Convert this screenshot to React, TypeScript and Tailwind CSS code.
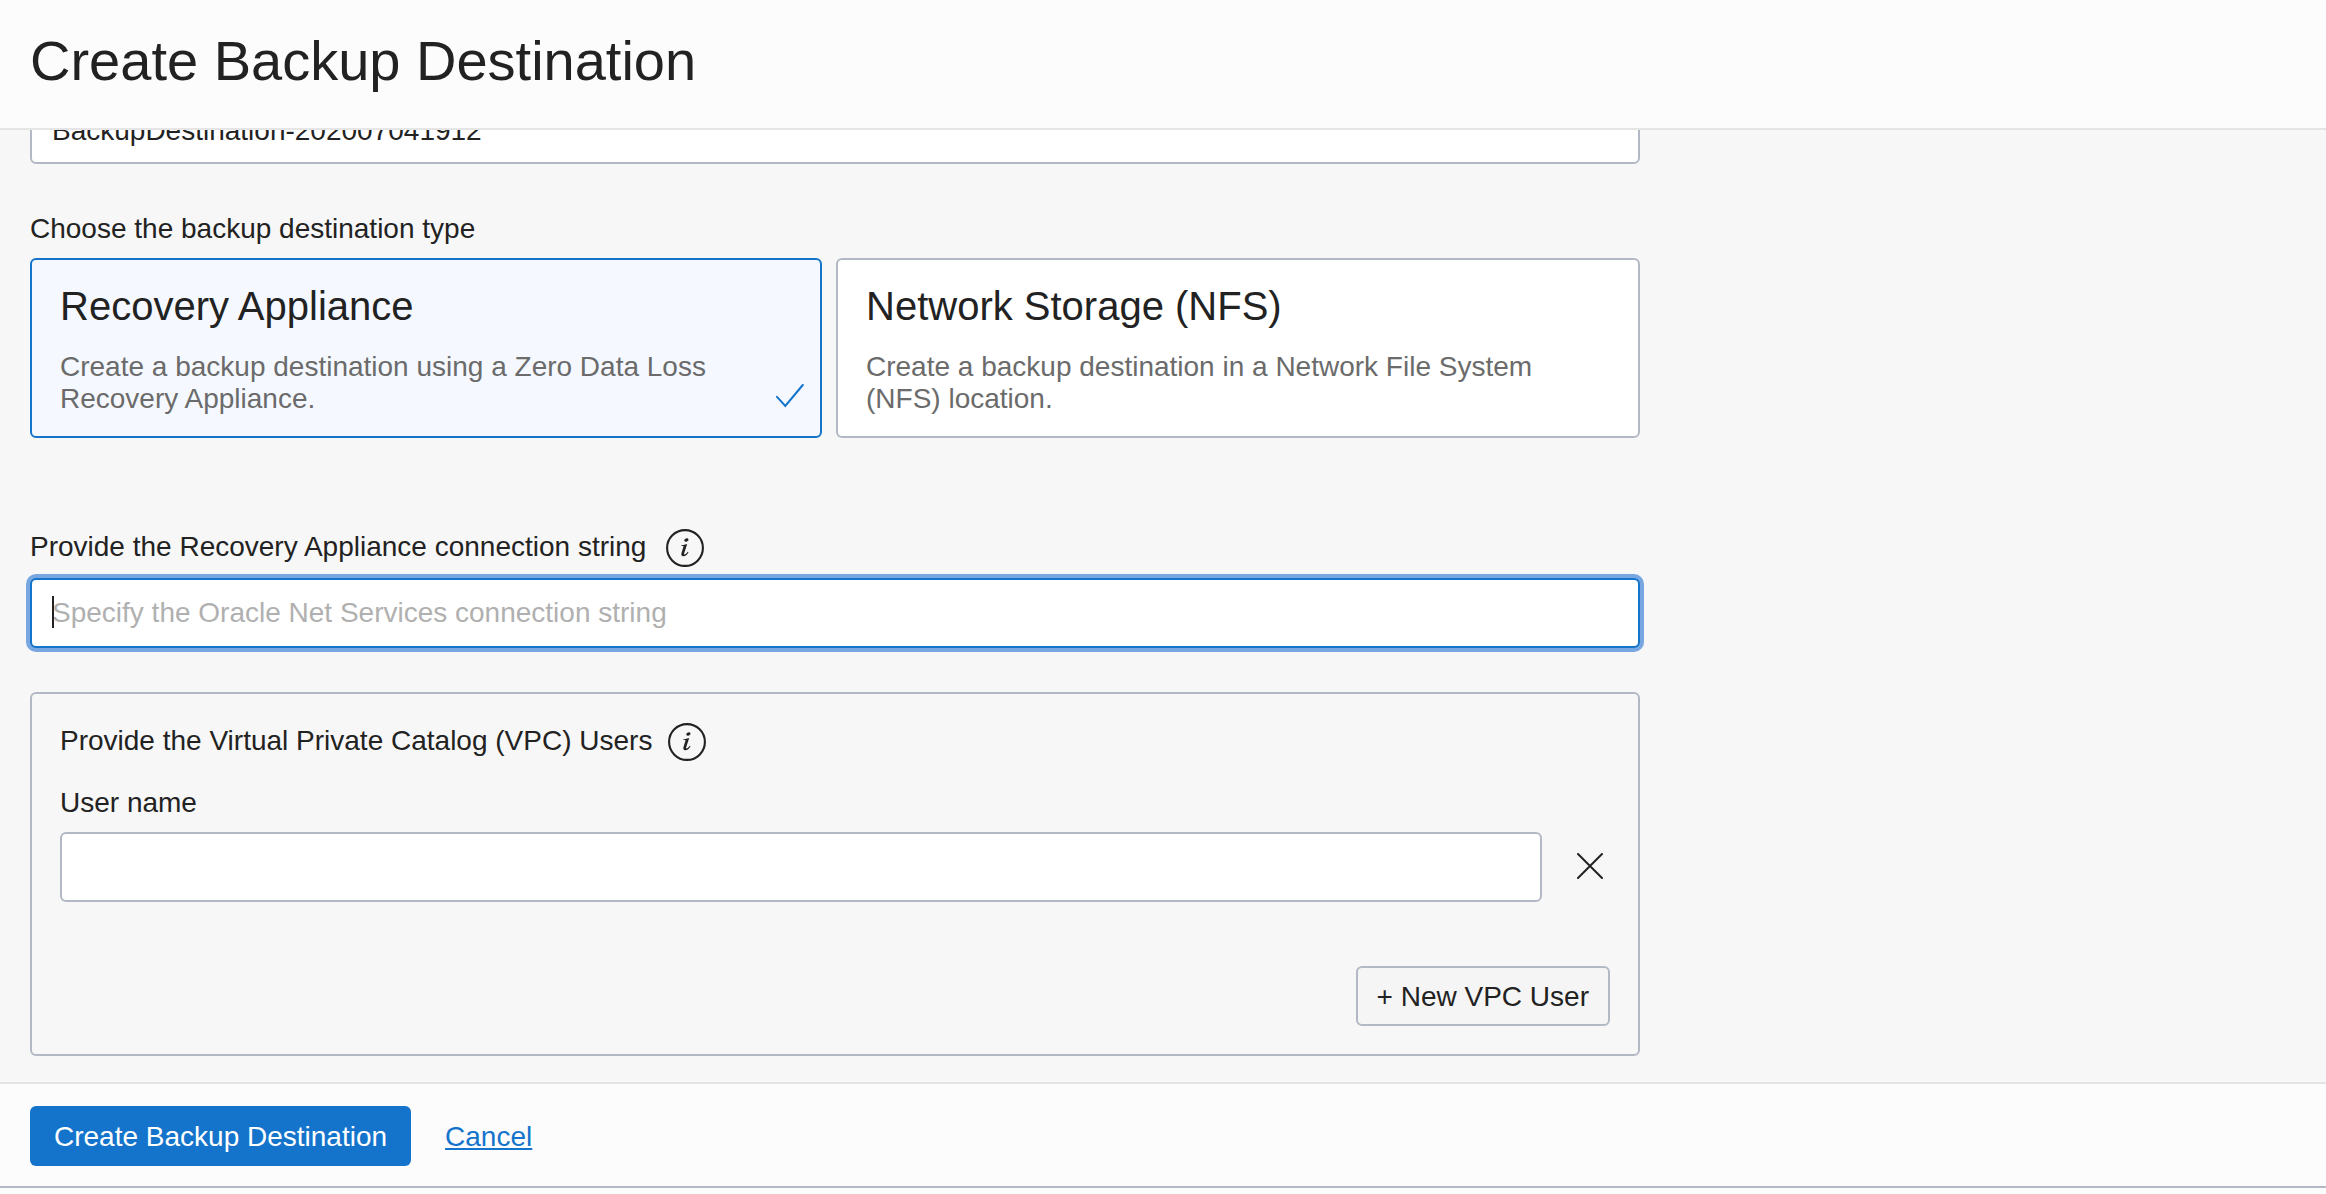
import { useState } from "react";

const field =
  "block h-[70px] w-full rounded-md border-2 border-[#b3b9c4] bg-white px-5 text-[28px] text-[#222] outline-none placeholder:text-[#b0b0b0] placeholder:opacity-100";

function InfoIcon() {
  return (
    <svg viewBox="0 0 38 38" className="size-[38px]" fill="none" aria-hidden="true">
      <circle cx="19" cy="19" r="17.9" stroke="#222" strokeWidth="2.1" />
      <ellipse cx="20.4" cy="10.9" rx="2.2" ry="1.6" fill="#222" transform="rotate(-20 20.4 10.9)" />
      <path
        d="M15.2 16.4 L21.2 14.9 L18.1 24.6 C17.8 25.7 18.5 25.8 19.2 25.2 C20.1 24.6 21 23.8 21.8 22.7 L22.5 23.2 C21.1 25.6 19.3 27.4 17.2 27.3 C15.6 27.2 14.9 26 15.5 24 L17.5 17.6 C17.7 16.9 17.2 16.8 15.1 17.1 Z"
        fill="#222"
      />
    </svg>
  );
}

function InfoButton({ label }: { label: string }) {
  return (
    <button type="button" aria-label={label} className="shrink-0 rounded-full">
      <InfoIcon />
    </button>
  );
}

function TypeCard({
  title,
  text,
  value,
  selected,
  onSelect,
}: {
  title: string;
  text: string;
  value: string;
  selected: boolean;
  onSelect: (value: string) => void;
}) {
  return (
    <label
      className={
        "flex cursor-pointer items-end rounded-md border-2 pt-[22px] pb-[21px] pl-7 " +
        (selected ? "border-[#1474cc] bg-[#f5f9ff]" : "border-[#b3b9c4] bg-white")
      }
    >
      <input
        type="radio"
        name="destination-type"
        className="sr-only"
        value={value}
        checked={selected}
        onChange={() => onSelect(value)}
      />
      <span className="flex-1 self-start">
        <span className="block text-[40px] leading-[48px]">{title}</span>
        <span className="mt-[21px] block max-w-[690px] text-[28px] leading-8 text-[#6b6b6b]">{text}</span>
      </span>
      {selected && (
        <svg viewBox="0 0 28 24" className="mr-4 mb-[7px] h-6 w-7 shrink-0" fill="none" aria-hidden="true">
          <path d="M1 12.8 L9.3 22 L26.8 1" stroke="#1474cc" strokeWidth="2" strokeLinecap="round" />
        </svg>
      )}
    </label>
  );
}

export default function App() {
  const [type, setType] = useState("appliance");
  const [name, setName] = useState("BackupDestination-202007041912");
  const [connection, setConnection] = useState("");
  const [user, setUser] = useState("");

  return (
    <form
      className="flex h-screen flex-col bg-[#fcfcfc] font-['Helvetica_Neue','Liberation_Sans',Arial,sans-serif] text-[28px] leading-8 text-[#222]"
      onSubmit={(e) => e.preventDefault()}
    >
      <header className="border-b-2 border-[#e5e5e5] px-[30px] pt-[29px] pb-[35px]">
        <h1 className="text-[56px] leading-[64px]">Create Backup Destination</h1>
      </header>

      <main className="min-h-0 flex-1 overflow-hidden bg-[#f7f7f7] px-[30px]">
        <div className="w-full max-w-[1610px]">
          <input
            aria-label="Backup destination name"
            className={field + " -mt-9 pt-1"}
            value={name}
            onChange={(e) => setName(e.target.value)}
          />

          <fieldset className="mt-[49px]">
            <legend>Choose the backup destination type</legend>
            <div className="mt-[13px] grid grid-cols-[792fr_804fr] gap-[14px]">
              <TypeCard
                title="Recovery Appliance"
                text="Create a backup destination using a Zero Data Loss Recovery Appliance."
                value="appliance"
                selected={type === "appliance"}
                onSelect={setType}
              />
              <TypeCard
                title="Network Storage (NFS)"
                text="Create a backup destination in a Network File System (NFS) location."
                value="nfs"
                selected={type === "nfs"}
                onSelect={setType}
              />
            </div>
          </fieldset>

          <div className="mt-[91px] flex items-start gap-5">
            <label htmlFor="connection" className="leading-9">
              Provide the Recovery Appliance connection string
            </label>
            <InfoButton label="About the connection string" />
          </div>
          <div className="relative mt-[11px]">
            <input
              id="connection"
              className="block h-[70px] w-full rounded-md border-2 border-[#1474cc] bg-white px-5 text-[28px] text-[#222] caret-transparent ring-4 ring-[#77a6e0] outline-none placeholder:text-[#b0b0b0] placeholder:opacity-100"
              placeholder="Specify the Oracle Net Services connection string"
              value={connection}
              onChange={(e) => setConnection(e.target.value)}
            />
            {connection === "" && (
              <span className="pointer-events-none absolute top-[18px] left-[22px] h-8 w-0.5 bg-[#222]" />
            )}
          </div>

          <section className="mt-11 rounded-md border-2 border-[#b3b9c4] px-7 pt-[29px] pb-7">
            <div className="flex items-start gap-4">
              <h2 className="leading-9">Provide the Virtual Private Catalog (VPC) Users</h2>
              <InfoButton label="About VPC users" />
            </div>
            <label htmlFor="user" className="mt-[26px] block">
              User name
            </label>
            <div className="mt-[13px] flex items-center">
              <input id="user" className={field} value={user} onChange={(e) => setUser(e.target.value)} />
              <button
                type="button"
                aria-label="Remove user"
                className="ml-7 flex size-10 shrink-0 items-center justify-center pb-0.5"
                onClick={() => setUser("")}
              >
                <svg viewBox="0 0 26 26" className="size-[26px]" fill="none" aria-hidden="true">
                  <path d="M1 1 L25 25 M25 1 L1 25" stroke="#222" strokeWidth="2" strokeLinecap="round" />
                </svg>
              </button>
            </div>
            <div className="mt-16 flex justify-end">
              <button
                type="button"
                className="h-[60px] rounded-md border-2 border-[#b3b9c4] bg-[#f5f5f5] px-[19px] pt-0.5"
              >
                + New VPC User
              </button>
            </div>
          </section>
        </div>
      </main>

      <footer className="border-t-2 border-[#e5e5e5]">
        <div className="flex items-center gap-[34px] border-b-2 border-[#b3b9c4] px-[30px] pt-[22px] pb-5">
          <button type="submit" className="h-[60px] rounded-md bg-[#1474cc] px-6 pt-0.5 text-white">
            Create Backup Destination
          </button>
          <a href="#cancel" className="pt-0.5 text-[#1474cc] underline decoration-2 underline-offset-2">
            Cancel
          </a>
        </div>
        <div className="h-1.5" />
      </footer>
    </form>
  );
}
